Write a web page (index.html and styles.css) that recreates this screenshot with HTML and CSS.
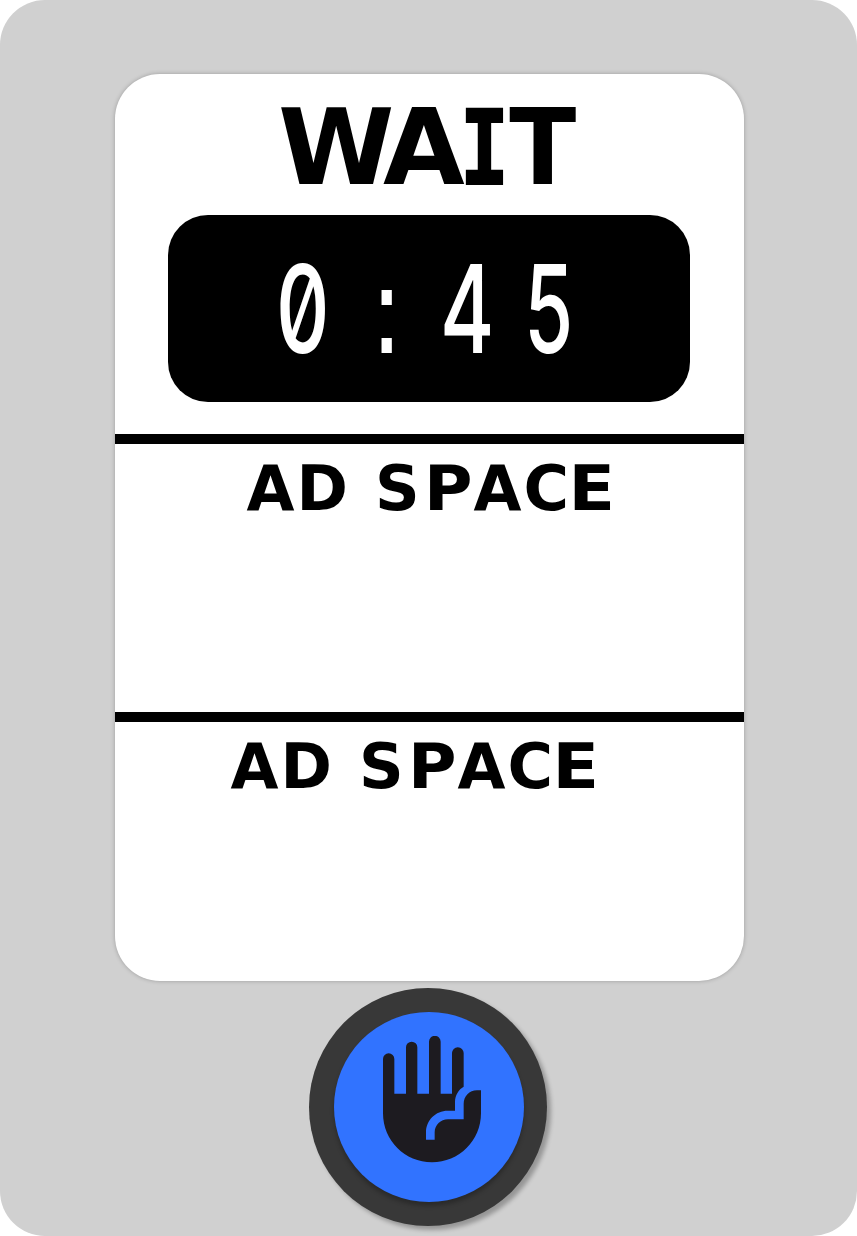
FILE: index.html
```html
<!DOCTYPE html>
<html lang="en">
<head>
<meta charset="utf-8">
<title>Crossing signal</title>
<link rel="stylesheet" href="styles.css">
</head>
<body>
<main class="device">
  <section class="screen">
    <div class="status">
      <svg class="wait" viewBox="0 0 629 141">
        <text y="110" x="163 268 344.8 394.2">WA<tspan class="slab" textLength="49.4" lengthAdjust="spacingAndGlyphs">I</tspan><tspan textLength="67" lengthAdjust="spacingAndGlyphs">T</tspan></text>
      </svg>
      <div class="timer">
        <svg class="digits" viewBox="0 0 522 187">
          <text transform="scale(.68 1)" y="138" x="159 297 400 524">0<tspan class="colon" textLength="49" lengthAdjust="spacingAndGlyphs">:</tspan>4<tspan textLength="72" lengthAdjust="spacingAndGlyphs">5</tspan></text>
        </svg>
      </div>
    </div>
    <div class="ad">
      <svg class="ad-label" viewBox="0 0 629 90">
        <text y="66" x="131.5 181.5 235 260 309 358.5 408.5 453.5">AD S<tspan textLength="48.5" lengthAdjust="spacingAndGlyphs">P</tspan>AC<tspan textLength="46.5" lengthAdjust="spacingAndGlyphs">E</tspan></text>
      </svg>
    </div>
    <div class="ad ad-last">
      <svg class="ad-label" viewBox="0 0 629 90">
        <text y="66" x="115.5 165.5 219 244 293 342.5 392.5 437.5">AD S<tspan textLength="48.5" lengthAdjust="spacingAndGlyphs">P</tspan>AC<tspan textLength="46.5" lengthAdjust="spacingAndGlyphs">E</tspan></text>
      </svg>
    </div>
  </section>
  <button class="push" aria-label="Push to cross">
    <span class="push-face">
      <svg class="hand" viewBox="39 32 294 380">
        <path d="M39 101a17 17 0 0 1 34 0V205H108V66a17 17 0 0 1 34 0V205H177V49a17.500 17.500 0 0 1 35 0V205H246V83a17.500 17.500 0 0 1 35 0V184C266 192 255 210 255 230V256H233C197 256 168 285 168 321V343H194V321C194 299 212 282 234 282H281V236C281 213 298 195 321 195H333V264C333 346 267 411 186 411S39 346 39 264Z"/>
      </svg>
    </span>
  </button>
</main>
</body>
</html>
```
FILE: styles.css
```css
* { box-sizing: border-box; }
body { margin: 0; background: #fff; }
.device {
  width: 857px;
  height: 1236px;
  padding-top: 74px;
  border-radius: 45px;
  background: #d0d0d0;
  display: flex;
  flex-direction: column;
  align-items: center;
}
.screen {
  width: 629px;
  height: 907px;
  margin-left: 2px;
  border-radius: 45px;
  background: #fff;
  box-shadow: 0 0 4px rgba(0, 0, 0, .25);
  display: flex;
  flex-direction: column;
}
svg { display: block; }
.status {
  height: 360px;
  display: flex;
  flex-direction: column;
  align-items: center;
}
.wait {
  width: 629px;
  height: 141px;
  font: bold 105.6px "DejaVu Sans", sans-serif;
}
.slab {
  font-family: "DejaVu Sans Mono", monospace;
  font-size: 103px;
  stroke: #000;
  stroke-width: 2px;
}
.timer {
  width: 522px;
  height: 187px;
  margin-right: 1px;
  border-radius: 40px;
  background: #000;
}
.digits {
  width: 522px;
  height: 187px;
  fill: #fff;
  font: 500 122px Inter, sans-serif;
  font-feature-settings: "zero" 1;
}
.colon { font-family: "DejaVu Sans", sans-serif; font-weight: 400; }
.ad {
  height: 278px;
  border-top: 10px solid #000;
}
.ad-last { height: auto; flex: 1; }
.ad-label {
  width: 629px;
  height: 90px;
  font: bold 62px "DejaVu Sans", sans-serif;
}
.push {
  width: 238px;
  height: 238px;
  margin: 7px 1px 0 0;
  padding: 0 0 0 2px;
  border: 0;
  border-radius: 50%;
  background: #383838;
  box-shadow: 4px 4px 4px rgba(0, 0, 0, .28);
  display: flex;
  align-items: center;
  justify-content: center;
}
.push-face {
  width: 190px;
  height: 190px;
  padding: 24px 0 0 49px;
  border-radius: 50%;
  background: #3173ff;
  box-shadow: 0 4px 4px rgba(0, 0, 0, .25);
}
.hand {
  width: 98px;
  height: 126.67px;
  fill: #1d1b20;
}
```
